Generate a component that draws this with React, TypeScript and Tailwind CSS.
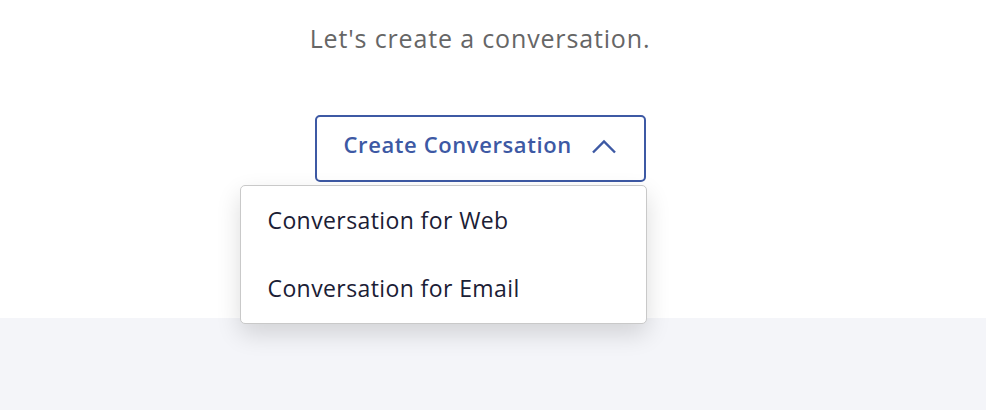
export default function App() {
  return (
    <div className="w-[986px] h-[410px] flex flex-col bg-white" style={{ fontFamily: "'Open Sans', sans-serif" }}>
      <div className="h-[318px] flex flex-col items-center pr-[26px]">
        <p className="mt-[21px] text-[25px] leading-[34px] tracking-[0.85px] text-[#666666]">Let's create a conversation.</p>
        <div className="relative mt-[60px]">
          <button className="w-[331px] h-[67px] border-2 border-[#3d59a4] rounded-[5px] flex items-center pl-[27px] pb-[8px] text-[22px] tracking-[0.6px] font-semibold text-[#3d59a4]">
            <span>Create Conversation</span>
            <svg className="ml-[19px] mt-[4px]" width="26" height="15" viewBox="0 0 26 15" fill="none">
              <path d="M2 13.5 L13 2.5 L24 13.5" stroke="#3d59a4" strokeWidth="2.4" />
            </svg>
          </button>
          <div className="absolute right-[-1px] top-[70px] w-[407px] h-[139px] bg-white border border-[#c9c9c9] rounded-[5px] shadow-[0_10px_24px_rgba(0,0,0,0.14)] z-10 flex flex-col pt-[17px]">
            <div className="pl-[27px] text-[23px] leading-[34px] tracking-[0.4px] text-[#1b2035]">Conversation for Web</div>
            <div className="pl-[27px] mt-[34px] text-[23px] leading-[34px] tracking-[0.4px] text-[#1b2035]">Conversation for Email</div>
          </div>
        </div>
      </div>
      <div className="flex-1 bg-[#f4f5f9]"></div>
    </div>
  );
}
